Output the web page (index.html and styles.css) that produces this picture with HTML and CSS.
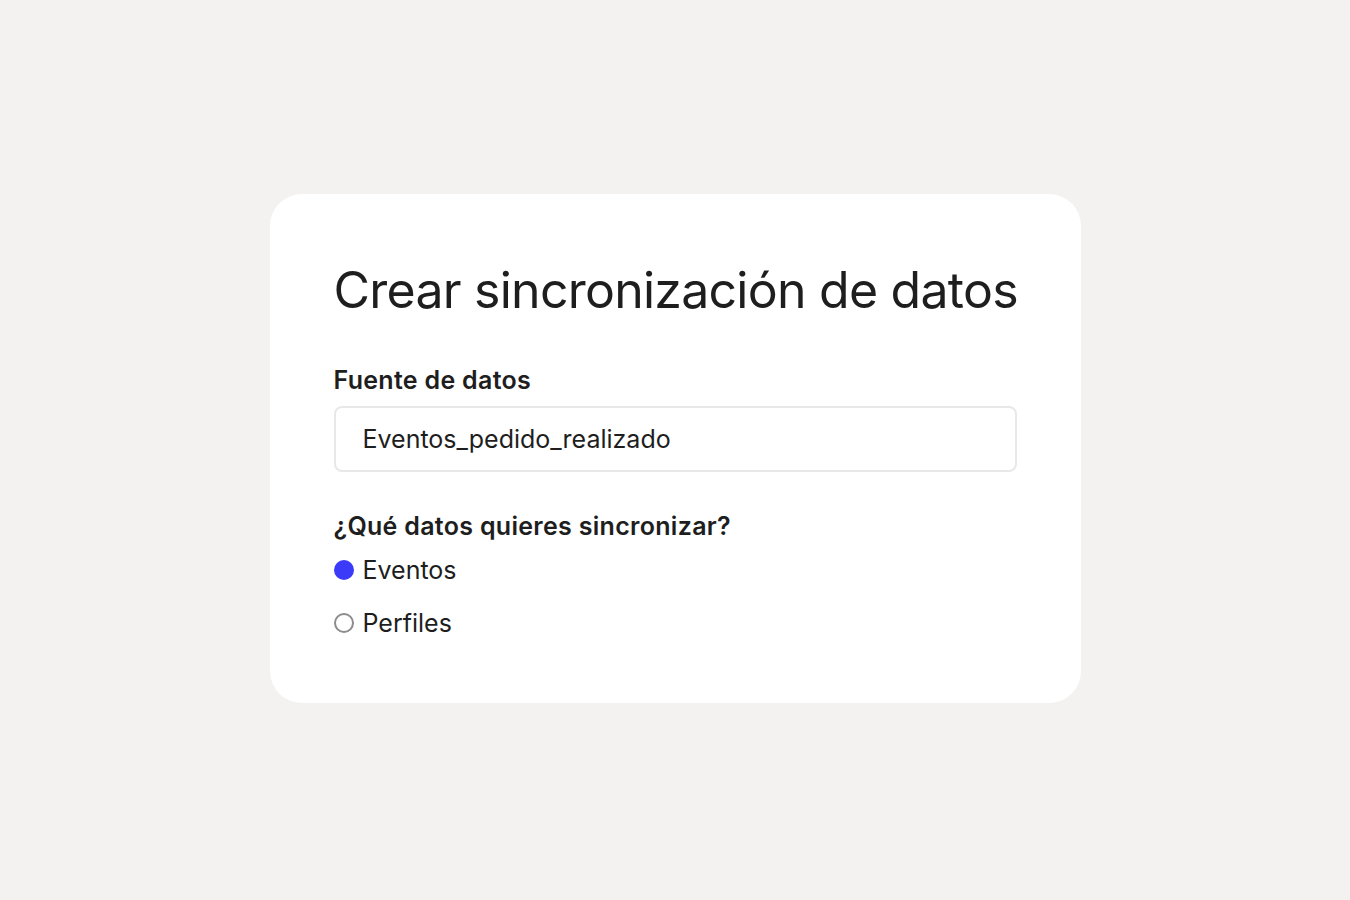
FILE: index.html
```html
<!DOCTYPE html>
<html lang="es">
<head>
  <meta charset="UTF-8">
  <meta name="viewport" content="width=device-width, initial-scale=1.0">
  <title>Crear sincronización de datos</title>
  <link rel="stylesheet" href="styles.css">
</head>
<body>
  <div class="card">
    <h1 class="title">Crear sincronización de datos</h1>

    <div class="field">
      <label class="label" for="source">Fuente de datos</label>
      <div class="input" id="source">Eventos_pedido_realizado</div>
    </div>

    <div class="field">
      <div class="label">¿Qué datos quieres sincronizar?</div>
      <div class="options">
        <label class="option">
          <span class="radio checked"></span>
          <span>Eventos</span>
        </label>
        <label class="option">
          <span class="radio"></span>
          <span>Perfiles</span>
        </label>
      </div>
    </div>
  </div>
</body>
</html>
```

FILE: styles.css
```css
html, body {
  height: 100%;
}

body {
  margin: 0;
  font-family: Inter, "Noto Sans", sans-serif;
  background-color: #f3f2f0;
  color: #1e1e1e;
  display: flex;
  justify-content: center;
  align-items: center;
}

.card {
  width: 683px;
  padding: 64px 64px 64px;
  background-color: #ffffff;
  border-radius: 32px;
  margin-top: -3px;
}

.title {
  margin: 0 0 42px;
  font-size: 50px;
  font-weight: 400;
  line-height: 64px;
  letter-spacing: -0.75px;
  white-space: nowrap;
}

.field {
  margin-bottom: 38px;
}

.field:last-child {
  margin-bottom: 0;
}

.label {
  display: block;
  font-size: 25px;
  font-weight: 600;
  line-height: 32px;
  letter-spacing: 0.3px;
  margin-bottom: 10px;
}

.field:last-child .label {
  margin-bottom: 12px;
}

.input {
  height: 62px;
  padding: 0 27px;
  border: 2px solid #e8e8e8;
  border-radius: 8px;
  display: flex;
  align-items: center;
  font-size: 25px;
}

.options {
  display: flex;
  flex-direction: column;
  gap: 21px;
}

.option {
  display: flex;
  align-items: center;
  gap: 9px;
  font-size: 25px;
  line-height: 32px;
}

.radio {
  width: 20px;
  height: 20px;
  box-sizing: border-box;
  border-radius: 50%;
  border: 2px solid #8c8c8c;
}

.radio.checked {
  border: none;
  background-color: #3a3af8;
}
```
